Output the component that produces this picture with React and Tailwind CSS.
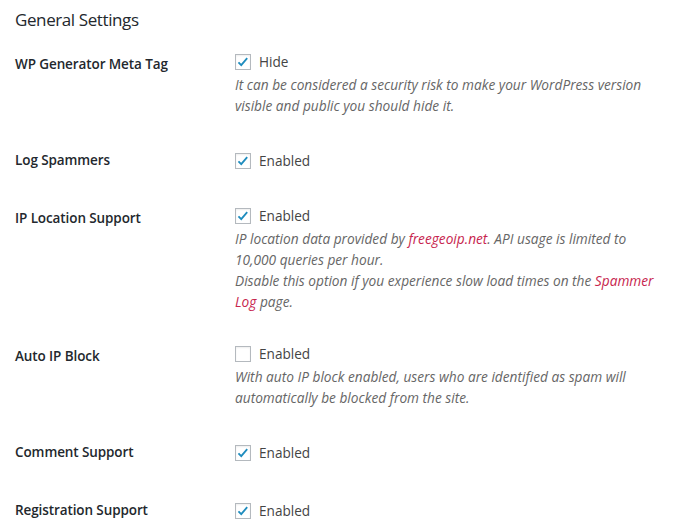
import React from "react";

const FONT = { fontFamily: '"Open Sans", "Noto Sans", sans-serif' };

function Checkbox({ checked }) {
  return (
    <span className="w-4 h-4 flex-shrink-0 border border-[#b4b9be] bg-white shadow-[inset_0_1px_2px_rgba(0,0,0,0.07)] flex items-center justify-center">
      {checked && (
        <svg width="14" height="14" viewBox="0 0 20 20">
          <path d="M3.5 10.5l4 4 8.5-10" fill="none" stroke="#1e8cbe" strokeWidth="2.6" />
        </svg>
      )}
    </span>
  );
}

function Row({ label, checked, text, children }) {
  return (
    <div className="flex">
      <div className="w-[220px] flex-shrink-0 py-5 pr-2.5 text-[13.5px] tracking-[-0.1px] font-semibold leading-[18px] text-[#23282d]">
        {label}
      </div>
      <div className={children ? "py-[15px] flex-1" : "pt-[18px] pb-[12px] flex-1"}>
        <div className="h-6 flex items-center gap-2 text-[13.6px] text-[#444]">
          <Checkbox checked={checked} />
          <span>{text}</span>
        </div>
        {children && (
          <div className="text-[13.7px] italic leading-[21px] text-[#666]">{children}</div>
        )}
      </div>
    </div>
  );
}

export default function App() {
  return (
    <div className="bg-white min-h-[526px] pl-[15px]" style={FONT}>
      <h2 className="pt-[8px] h-[35px] text-[17px] tracking-[-0.4px] leading-[23px] text-[#23282d] font-normal">
        General Settings
      </h2>
      <Row label="WP Generator Meta Tag" checked text="Hide">
        <p>It can be considered a security risk to make your WordPress version</p>
        <p>visible and public you should hide it.</p>
      </Row>
      <Row label="Log Spammers" checked text="Enabled" />
      <Row label="IP Location Support" checked text="Enabled">
        <p>
          IP location data provided by <a className="text-[#c7254e]">freegeoip.net</a>. API usage is limited to
        </p>
        <p>10,000 queries per hour.</p>
        <p>
          Disable this option if you experience slow load times on the <a className="text-[#c7254e]">Spammer</a>
        </p>
        <p>
          <a className="text-[#c7254e]">Log</a> page.
        </p>
      </Row>
      <Row label="Auto IP Block" checked={false} text="Enabled">
        <p>With auto IP block enabled, users who are identified as spam will</p>
        <p>automatically be blocked from the site.</p>
      </Row>
      <Row label="Comment Support" checked text="Enabled" />
      <Row label="Registration Support" checked text="Enabled" />
    </div>
  );
}
